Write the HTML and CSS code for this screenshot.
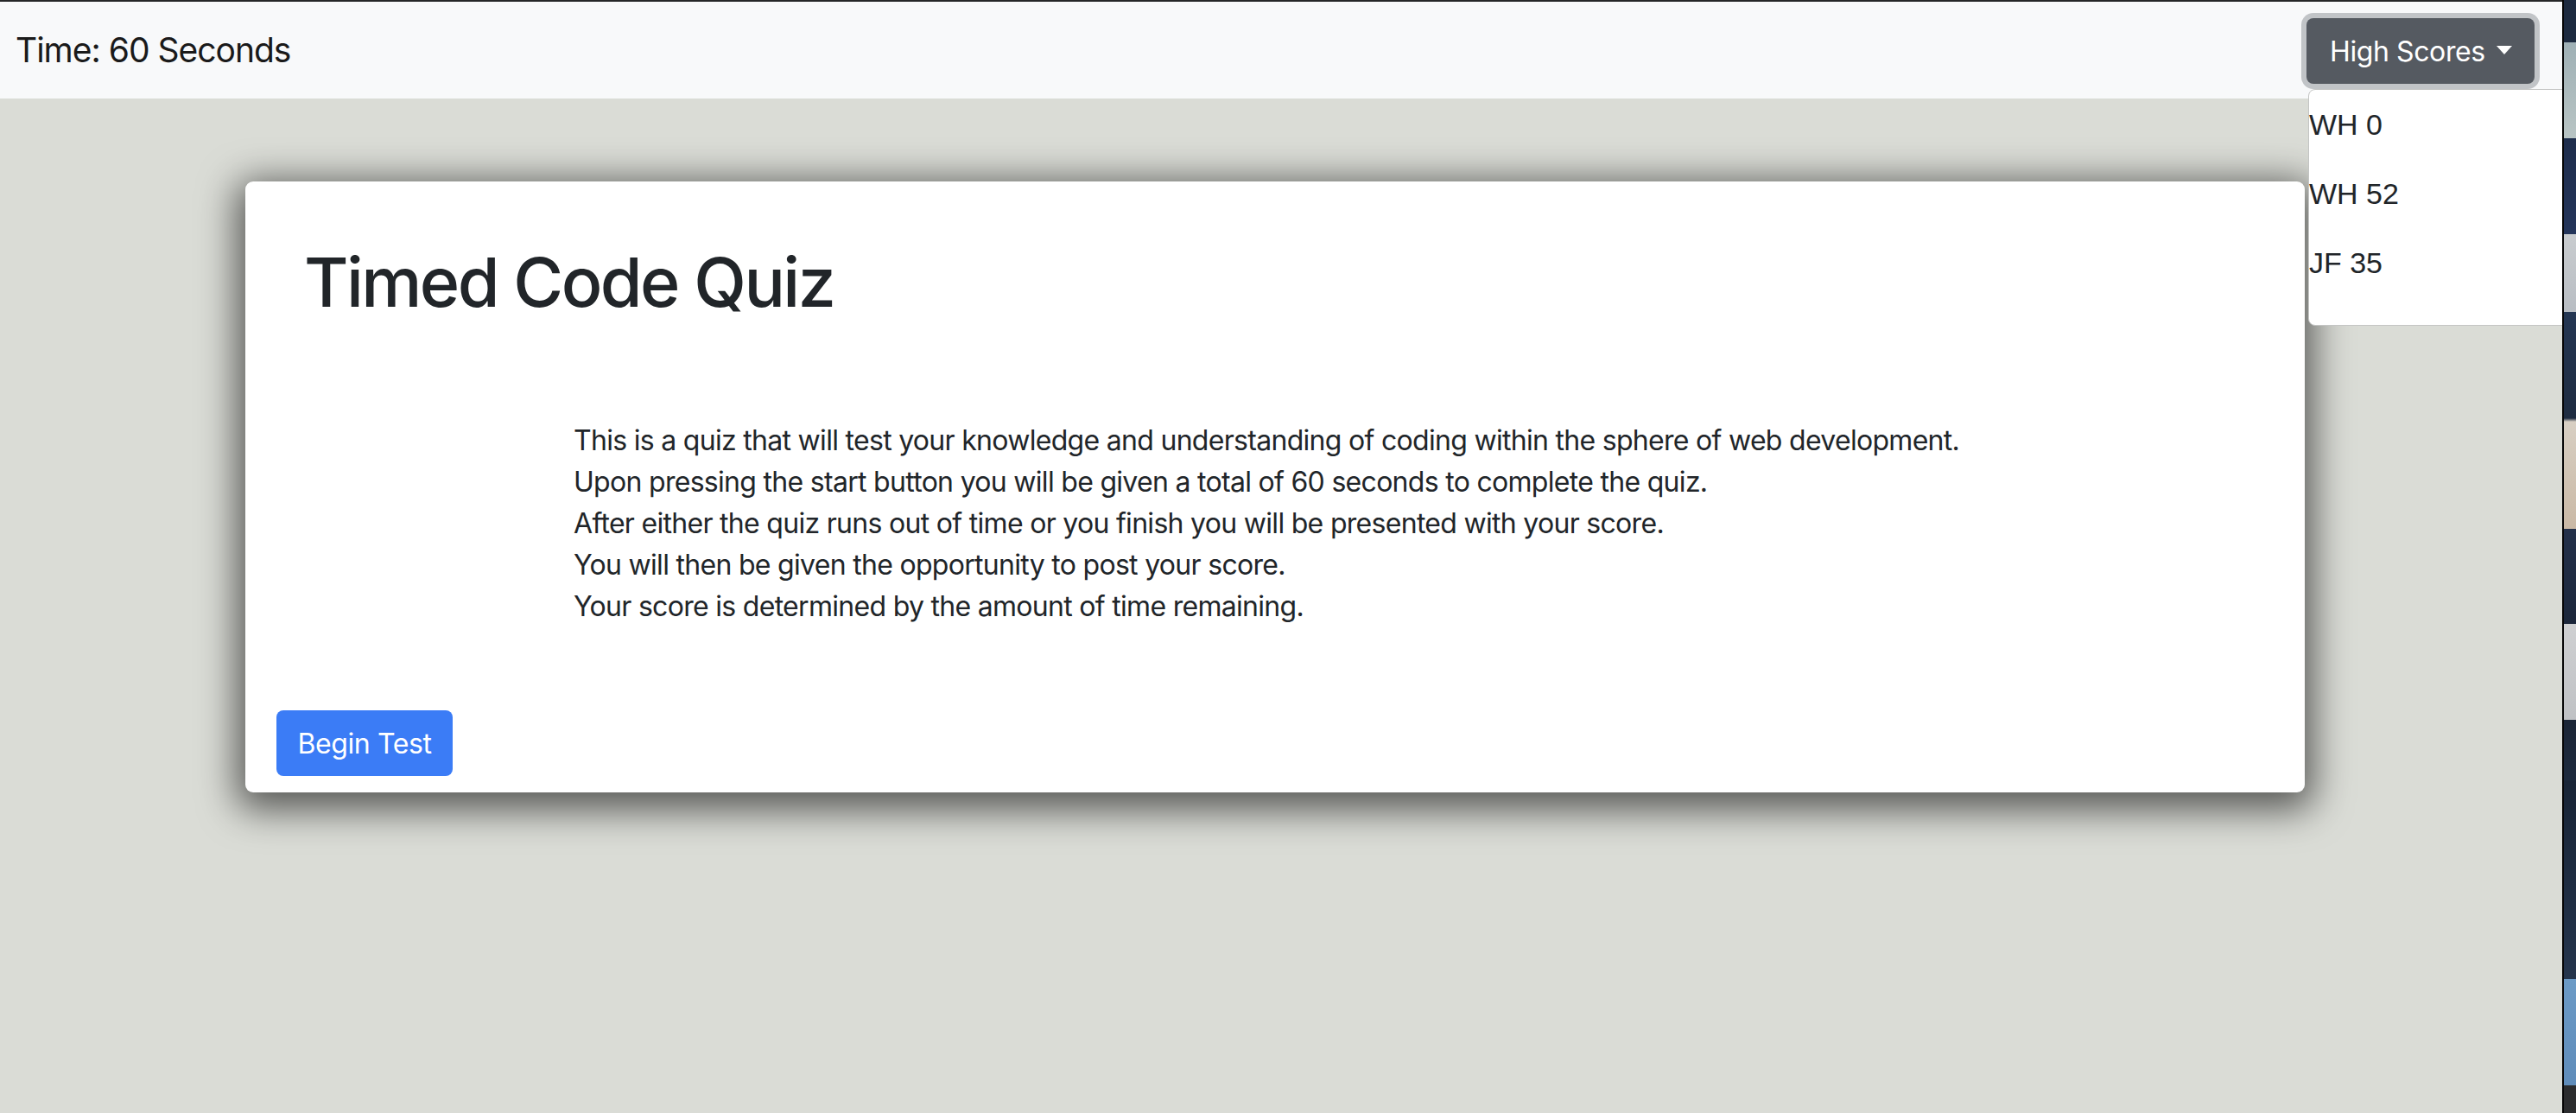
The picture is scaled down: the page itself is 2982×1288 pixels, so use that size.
FILE: index.html
```html
<!DOCTYPE html>
<html lang="en">
<head>
<meta charset="utf-8">
<title>Timed Code Quiz</title>
<link rel="stylesheet" href="styles.css">
</head>
<body>
<div class="screen">
  <div class="page">
    <nav class="navbar">
      <span class="brand">Time: 60 Seconds</span>
      <div class="dropdown">
        <button class="btn-scores" type="button">High Scores <span class="caret"></span></button>
        <div class="menu">
          <p class="menu-item">WH 0</p>
          <p class="menu-item">WH 52</p>
          <p class="menu-item">JF 35</p>
        </div>
      </div>
    </nav>
    <main class="content">
      <section class="card">
        <h1 class="title">Timed Code Quiz</h1>
        <p class="intro">This is a quiz that will test your knowledge and understanding of coding within the sphere of web development.<br>Upon pressing the start button you will be given a total of 60 seconds to complete the quiz.<br>After either the quiz runs out of time or you finish you will be presented with your score.<br>You will then be given the opportunity to post your score.<br>Your score is determined by the amount of time remaining.</p>
        <button class="btn-begin" type="button">Begin Test</button>
      </section>
    </main>
  </div>
  <div class="desktop-strip"></div>
</div>
</body>
</html>
```
FILE: styles.css
```css
html, body {
  margin: 0;
  padding: 0;
}
body {
  font-family: Inter, "Liberation Sans", sans-serif;
  color: #212529;
  background: #dadcd6;
}
.screen {
  display: flex;
  width: 2982px;
  height: 1288px;
  overflow: hidden;
}
.page {
  width: 2966px;
  height: 1288px;
  background: #dadcd6;
  overflow: hidden;
  flex: none;
}
.navbar {
  height: 112px;
  border-top: 2px solid #262728;
  background: #f8f9fa;
  display: flex;
  align-items: center;
  justify-content: space-between;
  padding: 0 32px 0 18px;
}
.brand {
  font-size: 39px;
  color: #1a1a1a;
  line-height: 48px;
  letter-spacing: -1px;
}
.dropdown {
  position: relative;
  margin-top: 2px;
}
.btn-scores {
  height: 76px;
  width: 264px;
  border: 0;
  border-radius: 8px;
  background: #555a61;
  color: #fff;
  font-family: Inter, "Liberation Sans", sans-serif;
  font-size: 32px;
  letter-spacing: -0.4px;
  padding: 0 26px 0 27px;
  display: flex;
  align-items: center;
  justify-content: space-between;
  box-shadow: 0 0 0 6px #c1c4c7;
}
.caret {
  width: 0;
  height: 0;
  border-top: 10px solid #fff;
  border-left: 9px solid transparent;
  border-right: 9px solid transparent;
  margin-top: -2px;
}
.menu {
  position: absolute;
  left: 2px;
  top: 82px;
  width: 340px;
  padding: 16px 0;
  background: #fff;
  border: 1px solid #c4c5c4;
  border-radius: 8px;
  z-index: 5;
}
.menu-item {
  margin: 0 0 32px;
  font-family: "Liberation Sans", Arial, sans-serif;
  font-size: 34px;
  line-height: 48px;
  color: #212529;
}
.content {
  padding: 96px 0 0 284px;
}
.card {
  width: 2384px;
  height: 707px;
  box-sizing: border-box;
  background: #fff;
  border-radius: 9px;
  box-shadow: 0 10px 44px 10px rgba(0, 0, 0, 0.6);
  padding: 68px 0 0 36px;
}
.title {
  margin: 0 0 0 32px;
  font-size: 79px;
  font-weight: 500;
  line-height: 96px;
  color: #212529;
  letter-spacing: -2.6px;
}
.intro {
  margin: 112px 0 0 344px;
  font-size: 32px;
  line-height: 48px;
  color: #212529;
  letter-spacing: -0.7px;
}
.btn-begin {
  margin-top: 96px;
  height: 76px;
  width: 204px;
  border: 0;
  border-radius: 8px;
  background: #3b7cf6;
  color: #fff;
  font-family: Inter, "Liberation Sans", sans-serif;
  font-size: 32px;
  letter-spacing: -0.4px;
  padding: 0;
}
.desktop-strip {
  width: 14px;
  height: 1288px;
  flex: none;
  border-left: 2px solid #050505;
  background: linear-gradient(180deg,
    #1d2a3f 0, #1d2a3f 49px,
    #9fb0b5 49px, #b8c4c4 160px,
    #1e2d4c 160px, #24355a 271px,
    #c9cccf 271px, #b8bdc3 361px,
    #243653 361px, #1e2b40 484px,
    #d8cfc3 488px, #c9b8a5 612px,
    #23304a 612px, #1b263a 722px,
    #cfd0d2 722px, #bfc1c4 833px,
    #1b2536 833px, #1d2a3e 903px,
    #182436 903px, #24344c 1133px,
    #6b9ac6 1133px, #5f8cba 1256px,
    #2b2c2e 1256px, #2b2c2e 1288px);
}
```
